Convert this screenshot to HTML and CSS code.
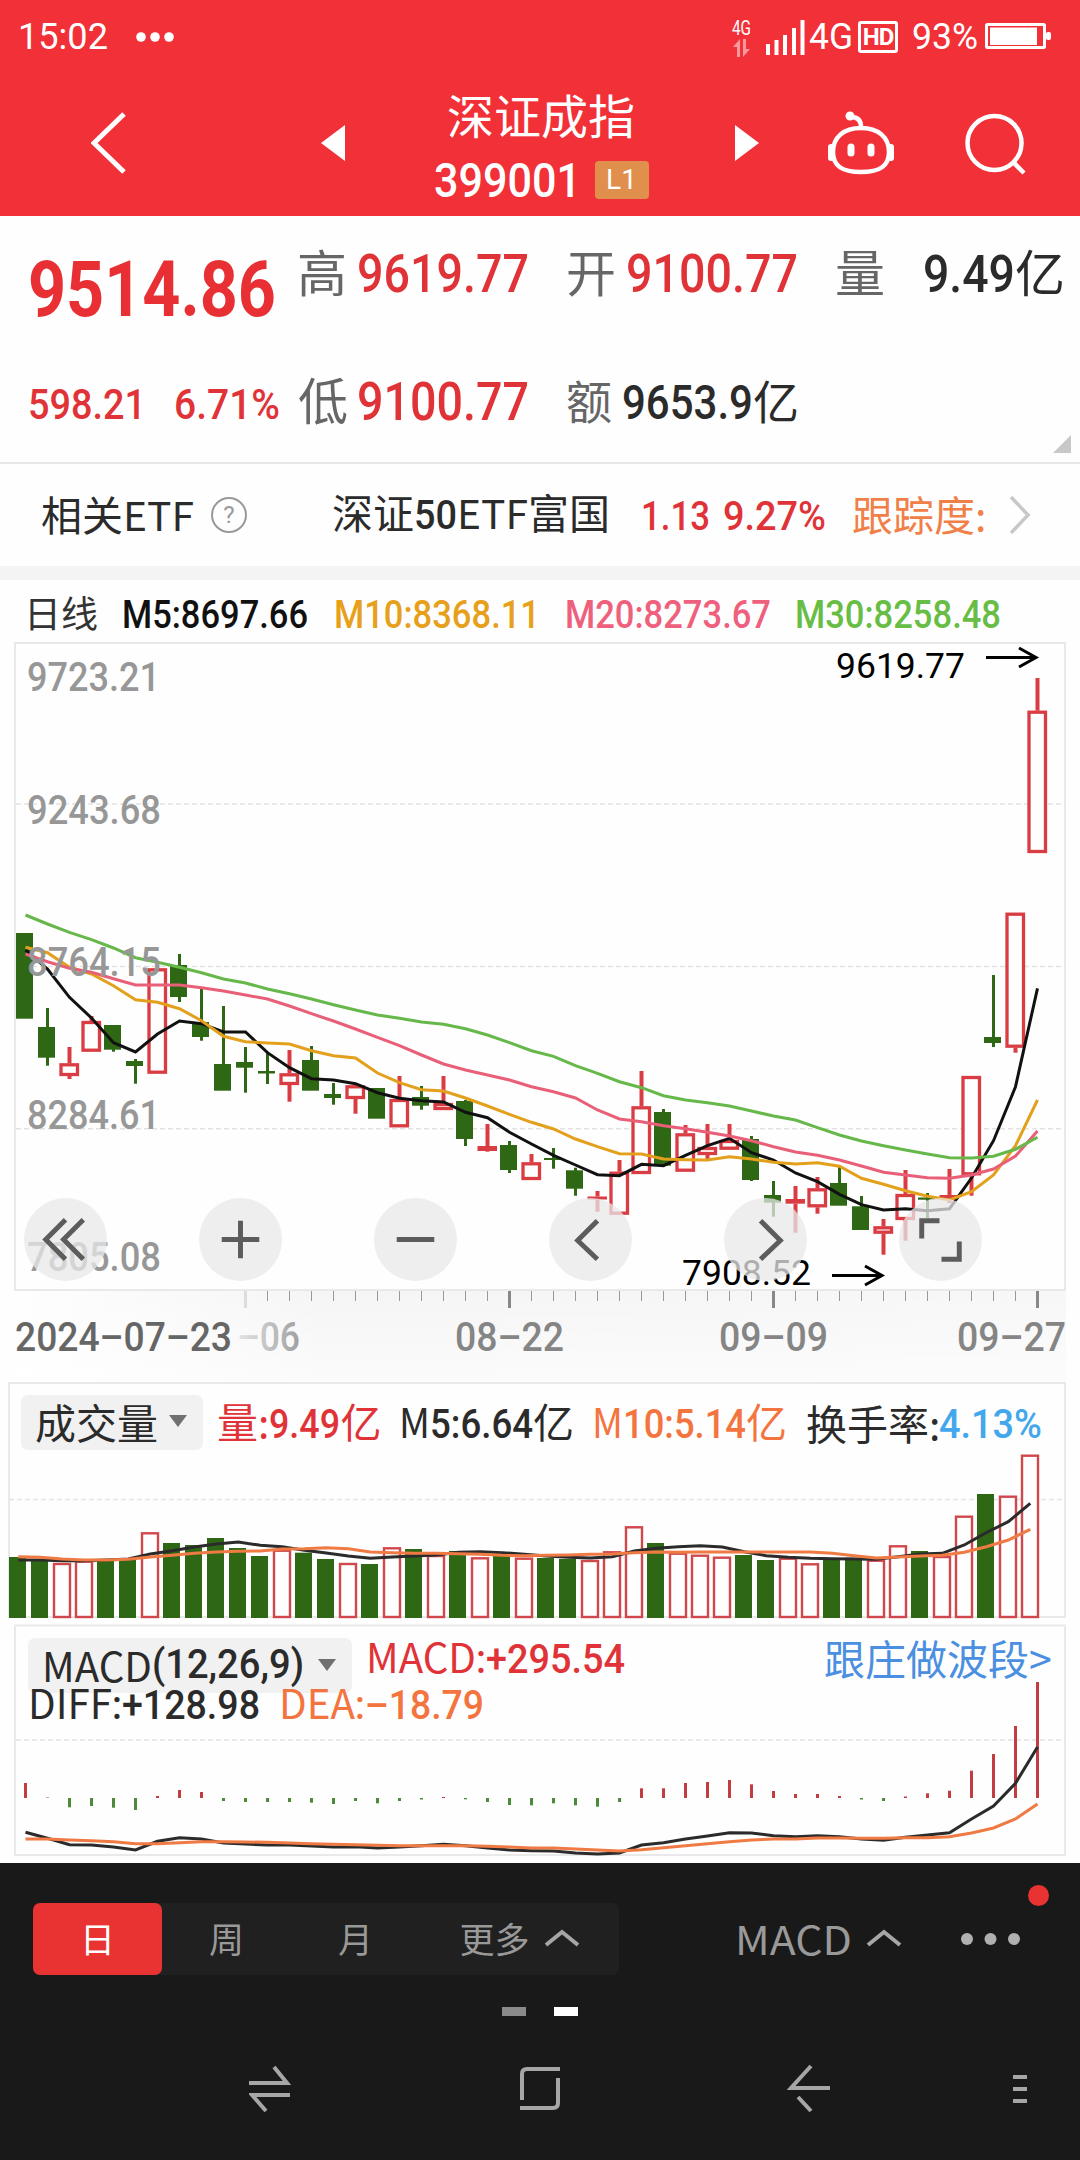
FILE: index.html
```html
<!DOCTYPE html>
<html lang="zh-CN">

<head>
    <meta charset="UTF-8">
    <meta name="viewport" content="width=device-width, initial-scale=1.0">
    <title>深证成指 399001</title>
    <link rel="stylesheet" href="styles.css">
</head>

<body>
    <header>
        <div class="status">
            <span class="fit" data-w="90">15:02</span>
            <svg width="40" height="12" viewBox="0 0 40 12" fill="#fff">
                <circle cx="6" cy="6" r="4.8" /><circle cx="20" cy="6" r="4.8" /><circle cx="34" cy="6" r="4.8" />
            </svg>
            <div class="net">
                <span class="fit" data-w="26">4G</span>
                <svg width="20" height="18" viewBox="0 0 20 18" fill="#fff" opacity=".5">
                    <path d="M5 18V8H1L8 0V18zM11 0V18L18 10H14V0z" />
                </svg>
            </div>
            <svg width="40" height="36" viewBox="0 0 40 36" fill="#fff">
                <path d="M0 25h4v11h-4zM8.5 21h4v15h-4zM17 16h4v20h-4zM26 9h4v27h-4zM34.5 1h4v35h-4z" />
            </svg>
            <span class="fit" data-w="44">4G</span>
            <span class="hd">HD</span>
            <span class="fit" data-w="66">93%</span>
            <svg width="68" height="28" viewBox="0 0 68 28">
                <rect x="1.5" y="1.5" width="58" height="23" rx="1" fill="none" stroke="#fff" stroke-width="3" />
                <rect x="5" y="4.5" width="47" height="17.5" fill="#fff" />
                <rect x="61" y="9" width="5" height="8" rx="2" fill="#fff" />
            </svg>
        </div>
        <div class="titlebar">
            <svg width="36" height="66" viewBox="0 0 36 66" fill="none" stroke="#fff" stroke-width="5">
                <path d="M33 4L3 33L33 62" />
            </svg>
            <svg width="25" height="36" viewBox="0 0 25 36" fill="#fff"><path d="M25 0V36L1 18z" /></svg>
            <div class="title">
                <h1>深证成指</h1>
                <div class="code"><b class="fit" data-w="147">399001</b><span class="level">L1</span></div>
            </div>
            <svg width="25" height="36" viewBox="0 0 25 36" fill="#fff"><path d="M0 0V36L24 18z" /></svg>
            <svg width="72" height="66" viewBox="0 0 72 66" fill="none" stroke="#fff" stroke-width="4.5">
                <path d="M37 17C37 10 33 7 27 7" />
                <circle cx="26" cy="6" r="3" fill="#fff" stroke-width="3" />
                <path d="M37 18C54 18 65 27 65 42C65 56 56 62 37 62C18 62 9 56 9 42C9 27 20 18 37 18z" />
                <path d="M7 37V48M67 37V48" stroke-width="6" stroke-linecap="round" />
                <path d="M27 37V43M47 37V43" stroke-width="7" stroke-linecap="round" />
            </svg>
            <svg width="66" height="66" viewBox="0 0 66 66" fill="none" stroke="#fff" stroke-width="4.5">
                <circle cx="31.5" cy="33" r="27" /><path d="M50 52L61 63" />
            </svg>
        </div>
    </header>

    <section class="quote">
        <div class="row row-1">
            <b class="fit price" data-w="248">9514.86</b>
            <span class="label">高</span><b class="fit up" data-w="172">9619.77</b>
            <span class="label">开</span><b class="fit up" data-w="172">9100.77</b>
            <span class="label">量</span>
            <span class="amount"><b class="fit" data-w="92">9.49</b>亿</span>
        </div>
        <div class="row row-2">
            <b class="fit change" data-w="118">598.21</b>
            <b class="fit change" data-w="106">6.71%</b>
            <span class="label">低</span><b class="fit up" data-w="172">9100.77</b>
            <span class="label small">额</span>
            <span class="amount small"><b class="fit" data-w="131">9653.9</b>亿</span>
        </div>
        <i class="corner"></i>
    </section>

    <section class="etf">
        <span class="cn">相关<span class="fit latin" data-w="71">ETF</span></span>
        <i class="help">?</i>
        <span class="cn">深证<b class="fit" data-w="43">50</b><span class="fit latin" data-w="71">ETF</span>富国</span>
        <b class="fit up" data-w="69">1.13</b>
        <b class="fit up" data-w="103">9.27%</b>
        <span class="cn track">跟踪度:</span>
        <svg width="24" height="38" viewBox="0 0 24 38" fill="none" stroke="#c8c8c8" stroke-width="3.5">
            <path d="M3 1L20 19L3 37" />
        </svg>
    </section>

    <section class="legend">
        <span class="day">日线</span>
        <b class="fit" data-w="186">M5:8697.66</b>
        <b class="fit m10" data-w="206">M10:8368.11</b>
        <b class="fit m20" data-w="206">M20:8273.67</b>
        <b class="fit m30" data-w="206">M30:8258.48</b>
    </section>

    <section class="kline">
        <svg id="kline" width="1080" height="739" viewBox="0 642 1080 739"></svg>
        <div class="tools">
            <button><svg viewBox="0 0 84 84"><path d="M42 22L22 42L42 62M60 22L40 42L60 62" /></svg></button>
            <button><svg viewBox="0 0 84 84"><path d="M23 42H61M42 23V61" /></svg></button>
            <button><svg viewBox="0 0 84 84"><path d="M23 42H61" /></svg></button>
            <button><svg viewBox="0 0 84 84"><path d="M49 23L29 43L49 62" /></svg></button>
            <button><svg viewBox="0 0 84 84"><path d="M37 23L57 43L37 62" /></svg></button>
            <button><svg viewBox="0 0 84 84"><path d="M41 23H23V41M61 44V62H43" /></svg></button>
        </div>
    </section>

    <section class="volume">
        <div class="info">
            <span class="select">成交量<i></i></span>
            <span class="red">量:<b class="fit" data-w="71">9.49</b>亿</span>
            <span><span class="fit latin" data-w="31">M</span><b class="fit" data-w="103">5:6.64</b>亿</span>
            <span class="orange"><span class="fit latin" data-w="31">M</span><b class="fit" data-w="123">10:5.14</b>亿</span>
            <span>换手率:</span>
            <b class="fit blue" data-w="103">4.13%</b>
        </div>
        <svg id="volume" width="1080" height="170" viewBox="0 1451 1080 170"></svg>
    </section>

    <section class="macd">
        <svg id="macd" width="1080" height="234" viewBox="0 1624 1080 234"></svg>
        <div class="info">
            <span class="select"><span class="fit latin" data-w="110">MACD</span><b class="fit" data-w="152">(12,26,9)</b><i></i></span>
            <span class="red"><span class="fit latin" data-w="110">MACD</span><b class="fit" data-w="149">:+295.54</b></span>
            <a class="link">跟庄做波段&gt;</a>
        </div>
        <div class="info line2">
            <span><span class="fit latin" data-w="84">DIFF</span><b class="fit" data-w="148">:+128.98</b></span>
            <span class="orange"><span class="fit latin" data-w="76">DEA</span><b class="fit" data-w="129">:–18.79</b></span>
        </div>
    </section>

    <footer>
        <i class="dot"></i>
        <div class="bar">
            <div class="periods">
                <span class="active">日</span>
                <span>周</span>
                <span>月</span>
                <span class="more">更多
                    <svg width="36" height="18" viewBox="0 0 36 18"><path d="M2 16L18 3L34 16" /></svg>
                </span>
            </div>
            <span class="indicator"><span class="fit latin" data-w="117">MACD</span>
                <svg width="36" height="18" viewBox="0 0 36 18"><path d="M2 16L18 3L34 16" /></svg>
            </span>
            <svg class="dots" width="60" height="14" viewBox="0 0 60 14">
                <circle cx="7" cy="7" r="6" /><circle cx="30.5" cy="7" r="6" /><circle cx="54" cy="7" r="6" />
            </svg>
        </div>
        <div class="pager"><i></i><i class="on"></i></div>
        <nav>
            <svg width="44" height="48" viewBox="0 0 44 48"><path d="M0 18H38L25 2M41 30H3L17 46" /></svg>
            <svg width="44" height="48" viewBox="0 0 44 48"><path d="M3 35V9Q3 4 8 4H41M39 13V38Q39 43 34 43H1" /></svg>
            <svg width="44" height="50" viewBox="0 0 44 50"><path d="M24 2L4 24H43M11 33L24 47" /></svg>
            <svg width="16" height="30" viewBox="0 0 16 30"><path d="M1 3H15M1 15H15M1 27H15" /></svg>
        </nav>
    </footer>

    <script src="chart.js"></script>
</body>

</html>
```
FILE: styles.css
```css
* {
    box-sizing: border-box;
}

body {
    margin: 0;
    width: 1080px;
    height: 2160px;
    overflow: hidden;
    display: flex;
    flex-direction: column;
    background-color: #fefefe;
    color: #2b2b2b;
    font-family: "Noto Sans CJK SC", sans-serif;
    line-height: 1;
}

svg {
    display: block;
    flex: none;
}

i {
    font-style: normal;
}

/* condensed figures, width comes from data-w */
.fit {
    display: inline-block;
    justify-self: start;
    font-family: Roboto, "Noto Sans CJK SC", sans-serif;
    white-space: nowrap;
    transform-origin: 0 50%;
}

.latin {
    font-family: "Noto Sans CJK SC", sans-serif;
}

b {
    font-weight: 500;
}

.up,
.red {
    color: #e03338;
}

.orange {
    color: #f4743f;
}

.blue {
    color: #42a7ec;
}

/* ---- header ---- */
header {
    height: 216px;
    background-color: #f13038;
    color: #fff;
}

.status {
    height: 74px;
    display: grid;
    grid-template-columns: 117px 597px 34px 43px 49px 54px 73px 68px;
    padding-left: 18px;
    align-items: center;
    font-size: 36px;
}

.net {
    font-size: 20px;
    height: 39px;
    display: flex;
    flex-direction: column;
    justify-content: space-between;
}

.hd {
    width: 40px;
    height: 32px;
    border: 3px solid #fff;
    border-radius: 3px;
    font: 700 24px/27px Roboto, sans-serif;
    text-align: center;
    letter-spacing: -1px;
}

.titlebar {
    height: 142px;
    padding-left: 91px;
    padding-bottom: 4px;
    display: grid;
    grid-template-columns: 229px 101px 314px 89px 139px 80px;
    align-items: center;
}

.title {
    width: 240px;
    display: flex;
    flex-direction: column;
    align-items: center;
    padding-top: 4px;
}

h1 {
    margin: 0 0 14px;
    font-size: 47px;
    line-height: 56px;
    font-weight: 400;
}

.code {
    display: flex;
    align-items: center;
    gap: 14px;
    font-size: 49px;
}

.level {
    width: 54px;
    height: 38px;
    border-radius: 4px;
    background-color: #e0904c;
    font: 400 28px/38px Roboto, sans-serif;
    text-align: center;
}

/* ---- quote ---- */
.quote {
    position: relative;
    height: 248px;
    border-bottom: 2px solid #e6e6e6;
}

.row {
    display: grid;
    grid-template-rows: 56px;
    align-items: center;
    font-size: 53px;
}

.row .up {
    padding-top: 5px;
}

.row-1 {
    margin-top: 28px;
    grid-template-columns: 269px 60px 209px 60px 209px 88px 160px;
    padding-left: 28px;
}

.row-2 {
    margin-top: 72px;
    grid-template-columns: 146px 124px 59px 209px 56px 180px;
    padding-left: 28px;
}

.price {
    font-size: 77px;
    font-weight: 700;
    color: #e83034;
    padding-top: 36px;
}

.change {
    font-size: 43px;
    color: #e03338;
    padding-top: 9px;
}

.label {
    font-size: 50px;
    color: #666;
    padding-bottom: 4px;
}

.label.small {
    font-size: 46px;
    padding-bottom: 2px;
}

.amount {
    white-space: nowrap;
    font-size: 50px;
    padding-top: 2px;
}

.amount.small {
    font-size: 46px;
}

.amount .fit {
    font-size: 52px;
}

.amount.small .fit {
    font-size: 49px;
}

.corner {
    position: absolute;
    right: 9px;
    bottom: 9px;
    border-left: 18px solid transparent;
    border-bottom: 18px solid #c8c8c8;
}

.etf {
    height: 116px;
    border-bottom: 14px solid #f4f4f4;
    padding-left: 41px;
    display: grid;
    grid-template-columns: 170px 121px 309px 82px 129px 156px 30px;
    align-items: center;
    font-size: 41px;
}

.cn {
    font-size: 41px;
    white-space: nowrap;
    padding-bottom: 4px;
}

.etf .fit {
    font-size: 40px;
}

.etf .up {
    padding-top: 3px;
}

.help {
    width: 36px;
    height: 36px;
    border: 2px solid #999;
    border-radius: 50%;
    color: #999;
    font: 24px/32px Roboto, sans-serif;
    text-align: center;
}

.track {
    color: #f08048;
}

.legend {
    height: 62px;
    padding: 7px 0 0 24px;
    display: grid;
    grid-template-columns: 98px 212px 231px 230px 220px;
    align-items: center;
    font-size: 38px;
    color: #111;
}

.day {
    font-size: 37px;
    color: #333;
    padding-bottom: 4px;
}

.m10 {
    color: #e6a01a;
}

.m20 {
    color: #ee607c;
}

.m30 {
    color: #68bd45;
}

/* ---- charts ---- */
.kline {
    position: relative;
    height: 739px;
}

.tools {
    position: absolute;
    top: 556px;
    left: 24px;
    display: flex;
    gap: 92px;
}

.tools button {
    width: 83px;
    height: 83px;
    padding: 0;
    border: none;
    border-radius: 50%;
    background-color: rgba(232, 232, 232, 0.75);
}

.tools path {
    fill: none;
    stroke: #5c5c5c;
    stroke-width: 5;
}

.info {
    display: grid;
    align-items: center;
    font-size: 41px;
    white-space: nowrap;
}

.volume .info {
    height: 70px;
    padding: 12px 0 0 21px;
    grid-template-columns: 196px 182px 193px 214px 133px 110px;
}

.volume .blue {
    padding-top: 4px;
}

.volume {
    height: 243px;
    position: relative;
    background: linear-gradient(#e9e9e9, #e9e9e9) 8px 1px / 1057px 2px no-repeat, linear-gradient(#e9e9e9, #e9e9e9) 8px 1px / 2px 80px no-repeat, linear-gradient(#e9e9e9, #e9e9e9) 1064px 1px / 2px 80px no-repeat;
}

.select {
    display: flex;
    align-items: center;
    width: 182px;
    height: 55px;
    padding-left: 14px;
    padding-bottom: 2px;
    border-radius: 7px;
    background-color: #f1f1f1;
}

.select i {
    margin-left: 11px;
    border: 9px solid transparent;
    border-top: 12px solid #707070;
    border-bottom: 0;
}

.macd {
    position: relative;
    height: 239px;
}

.macd svg {
    position: absolute;
    left: 0;
    top: 0;
}

.macd .info {
    position: relative;
    height: 69px;
    padding: 14px 0 0 28px;
    grid-template-columns: 338px 458px 240px;
    grid-template-rows: 55px;
}

.macd .select {
    width: 324px;
    padding: 0 0 2px 14px;
}

.macd .select i {
    margin-left: 14px;
}

.macd .info .red,
.macd .link {
    padding-bottom: 17px;
}

.macd .link {
    color: #4a8fe0;
    font-size: 41px;
}

.macd .line2 {
    height: 48px;
    padding: 0 0 0 28px;
    margin-top: -14px;
    grid-template-columns: 251px 300px;
    grid-template-rows: 48px;
}

.frame {
    fill: none;
    stroke: #e9e9e9;
    stroke-width: 2;
}

.grid {
    stroke: #e2e2e2;
    stroke-width: 1.5;
    stroke-dasharray: 5 3;
}

.line {
    fill: none;
    stroke-width: 3;
}

.scale {
    font: 500 40px Roboto, sans-serif;
    fill: #979797;
}

.date {
    font: 500 40px Roboto, sans-serif;
    fill: #858585;
}

.date.first {
    fill: #666;
}

.date.faded {
    fill: url(#fade);
}

.peak {
    font: 400 35.5px Roboto, sans-serif;
    fill: #000;
}

.arrow {
    fill: none;
    stroke: #000;
    stroke-width: 3;
}

/* ---- bottom ---- */
footer {
    position: relative;
    height: 297px;
    background-color: #191919;
    color: #999;
    font-size: 35px;
}

.dot {
    position: absolute;
    left: 1028px;
    top: 22px;
    width: 21px;
    height: 21px;
    border-radius: 50%;
    background-color: #e93232;
}

.bar {
    padding: 40px 0 0 33px;
    display: grid;
    grid-template-columns: 702px 225px 60px;
    align-items: center;
}

.periods {
    display: flex;
    width: 586px;
    height: 72px;
    border-radius: 7px;
    background-color: #202020;
}

.periods span {
    width: 129px;
    display: flex;
    align-items: center;
    justify-content: center;
    padding-bottom: 3px;
}

.periods .active {
    border-radius: 7px;
    background-color: #e93232;
    color: #fff;
}

.periods .more {
    width: 199px;
    gap: 14px;
}

.indicator {
    display: flex;
    align-items: center;
    gap: 14px;
    font-size: 40px;
    padding-bottom: 2px;
}

footer path {
    fill: none;
    stroke: #a6a6a6;
    stroke-width: 4;
}

.dots {
    fill: #b0b0b0;
}

.pager {
    display: flex;
    gap: 28px;
    padding: 32px 0 0 502px;
}

.pager i {
    width: 24px;
    height: 9px;
    background-color: #8a8a8a;
}

.pager .on {
    background-color: #fff;
}

nav {
    display: grid;
    grid-template-columns: 270px 268px 225px 16px;
    align-items: center;
    padding: 48px 0 0 249px;
}
```
FILE: chart.js
```js
// squeeze every .fit text to its own width
document.querySelectorAll(".fit").forEach(el => {
    const natural = el.getBoundingClientRect().width;
    el.style.width = el.dataset.w + "px";
    el.style.transform = `scaleX(${el.dataset.w / natural})`;
});

const UP = "#d93c42";
const DOWN = "#2f6815";
const STEP = 22;

// direction, high, body top, body bottom, low
const candles = [
    ["d", 933, 933, 1018.7, 1018], ["d", 1008, 1027, 1057.7, 1065.7], ["u", 1047, 1063.3, 1076, 1079],
    ["u", 1016, 1021, 1051.7, 1051], ["d", 1025, 1025, 1049.7, 1051.7], ["d", 1059, 1061, 1066, 1083.7],
    ["u", 969, 968.3, 1073.7, 1073], ["d", 954, 965, 997, 1002], ["d", 989, 1022, 1037, 1040.7],
    ["d", 1006, 1064, 1090.7, 1090], ["d", 1047, 1062, 1067.7, 1092.7], ["d", 1053, 1071, 1073.5, 1084],
    ["u", 1050, 1073.3, 1085, 1101.7], ["d", 1046, 1060, 1090.7, 1090], ["d", 1083, 1094, 1098, 1104.7],
    ["u", 1084, 1085.3, 1099, 1113.7], ["d", 1088, 1088, 1118.7, 1118], ["u", 1076, 1099, 1127.3, 1127],
    ["d", 1086, 1097, 1105.7, 1109.7], ["u", 1076, 1103, 1110, 1110], ["d", 1100, 1101, 1139, 1146],
    ["u", 1124, 1146, 1151, 1151.7], ["d", 1141, 1145, 1170, 1173], ["u", 1154, 1162.3, 1180, 1180],
    ["d", 1148, 1158, 1160, 1168.7], ["d", 1167.7, 1170.3, 1188.7, 1195.7], ["u", 1191, 1196.5, 1199.5, 1211.7],
    ["u", 1160, 1171.7, 1214.7, 1214], ["u", 1071, 1106.3, 1174, 1174], ["d", 1109, 1112, 1165.7, 1165],
    ["u", 1125, 1133.3, 1171.7, 1171], ["u", 1124, 1147, 1155, 1159], ["u", 1124, 1140, 1149.7, 1149],
    ["d", 1136, 1139, 1180, 1181], ["d", 1181, 1195, 1202.7, 1216.7], ["u", 1186, 1199, 1203.7, 1232.7],
    ["u", 1177, 1188.3, 1207.3, 1213.7], ["d", 1166, 1183, 1205.7, 1205], ["d", 1196, 1206.3, 1230, 1230],
    ["u", 1219, 1226.3, 1233.7, 1254.7], ["u", 1170, 1194, 1220, 1240.7], ["d", 1193, 1197.5, 1199.7, 1218],
    ["u", 1169, 1195, 1199, 1203], ["u", 1076, 1076, 1175.3, 1195.7], ["d", 975, 1037, 1043, 1047],
    ["u", 913, 912.7, 1047.7, 1052.7], ["u", 678, 710.7, 853, 853]
];

const ma5 = [950, 969, 997.3, 1018, 1042.7, 1052, 1034, 1021, 1023.7, 1032, 1032, 1052.7, 1067.7, 1078.7, 1080, 1083.7, 1092.7, 1098.3, 1100.7, 1102, 1112.3, 1117.7, 1132.3, 1144, 1155.3, 1165, 1174.7, 1175.7, 1164.3, 1165.7, 1155.3, 1145.7, 1138.3, 1152.7, 1160, 1173, 1181.7, 1194.3, 1204.7, 1210, 1208.7, 1210.7, 1208.7, 1178, 1140.7, 1086.7, 988.3];
const ma10 = [947.3, 952.7, 967.3, 974, 985.7, 999.7, 1002.3, 1008.7, 1020.7, 1036.3, 1041.7, 1043, 1044, 1050.7, 1055.7, 1058, 1073, 1082.7, 1089.7, 1091, 1098, 1106, 1114.3, 1122.3, 1129, 1139, 1146.7, 1153.7, 1154, 1159, 1159.7, 1160, 1156.7, 1159, 1162.3, 1164, 1162.7, 1166.3, 1178.3, 1184.3, 1190.7, 1196.3, 1200, 1191.7, 1175, 1145.7, 1100];
const ma20 = [954, 961.7, 968.3, 972.3, 978.7, 985, 985, 985, 987.7, 991, 995, 999, 1006, 1013.7, 1021, 1029, 1037.3, 1045.7, 1055, 1064, 1070, 1075, 1080, 1086.7, 1091.7, 1098, 1110, 1119, 1121.7, 1125.7, 1128.7, 1132.3, 1136, 1140.7, 1146.7, 1152, 1155.3, 1160, 1166, 1172.3, 1175, 1177.7, 1178.3, 1175, 1169, 1156, 1131];
const ma30 = [915, 924, 932.3, 939.7, 948, 957.7, 962.3, 967.3, 972.7, 979, 983, 989, 993.7, 999, 1004.7, 1010, 1015, 1018.3, 1022, 1024.3, 1028.7, 1035, 1042.7, 1050.7, 1056.3, 1065.7, 1073.3, 1081.7, 1087.7, 1095.7, 1100, 1102.7, 1106, 1111, 1116, 1120, 1127.7, 1135, 1141, 1145.7, 1150, 1154, 1157.7, 1158, 1156.3, 1149.3, 1137.3];

const volumes = [1557, 1560, 1563, 1560.7, 1560.7, 1560, 1532.3, 1543, 1545, 1538, 1548, 1556, 1549.7, 1552.7, 1559, 1563, 1564, 1547.3, 1549, 1555, 1551, 1557.3, 1555, 1557.7, 1558, 1559, 1560, 1551.3, 1526.3, 1543, 1552.7, 1554.7, 1556.7, 1555, 1560, 1557.7, 1563.3, 1559.7, 1557.7, 1559.7, 1545.3, 1551, 1556, 1515.7, 1494, 1495.7, 1454.7];
const vol5 = [1560, 1560, 1560.7, 1560.7, 1560, 1559, 1554, 1550.7, 1547, 1544, 1542, 1545.3, 1546.7, 1550.3, 1553, 1556, 1558.3, 1557, 1556, 1555, 1552.3, 1551.7, 1552.7, 1554.3, 1556, 1557.3, 1558, 1556.7, 1551, 1548.3, 1546.7, 1545.7, 1547, 1551.7, 1555.7, 1557.3, 1558.3, 1558.7, 1559, 1559.3, 1556.7, 1554, 1553.3, 1545, 1532.7, 1521.7, 1503.3];
const vol10 = [1556.7, 1557.3, 1559, 1560, 1560, 1559.3, 1557, 1555.3, 1553.3, 1552, 1551.3, 1551, 1549, 1548.7, 1547.7, 1548.7, 1552, 1552.7, 1553.3, 1553.3, 1553.7, 1554.3, 1555.3, 1555.7, 1555.3, 1555, 1554.3, 1554, 1552.7, 1552, 1552.3, 1552, 1552, 1552, 1552, 1552, 1552, 1553.3, 1555.7, 1558, 1557, 1556, 1555.3, 1552.3, 1546.7, 1540, 1529.3];

const macd = [1783, 1797.5, 1807.3, 1806, 1807.7, 1810, 1796, 1790, 1792, 1801, 1802, 1802, 1802, 1802.7, 1804, 1801, 1803.3, 1801, 1799.5, 1797, 1799.3, 1802, 1805, 1805.3, 1803.3, 1805.3, 1806.7, 1802, 1788.3, 1788.3, 1783, 1782, 1780, 1784.3, 1791, 1794, 1794, 1796, 1799.5, 1801, 1796.5, 1793.3, 1790.7, 1770.7, 1754, 1726, 1682];
const diff = [1832.3, 1838.3, 1844.7, 1845, 1847, 1850, 1841.3, 1837.7, 1839, 1843, 1844, 1845, 1845, 1846, 1847, 1846.7, 1848, 1847, 1845.7, 1844.3, 1845.7, 1848, 1850, 1850.7, 1851, 1853, 1854, 1853, 1845, 1842.7, 1839, 1836, 1832.7, 1833, 1835.7, 1836.7, 1835.7, 1836.7, 1839, 1840.3, 1837.3, 1835, 1832.7, 1819, 1806, 1783.3, 1747];
const dea = [1839, 1839, 1840, 1840.7, 1841.7, 1843.7, 1843.7, 1842.7, 1841.7, 1841.7, 1842, 1842.3, 1843, 1843.7, 1844.3, 1844.7, 1845.3, 1845.7, 1845.7, 1845.7, 1845.7, 1846.3, 1847, 1848, 1848, 1849, 1850, 1851, 1849.7, 1847.7, 1845.7, 1843.7, 1841.7, 1840, 1839, 1839, 1838, 1838, 1838.3, 1838.3, 1837.7, 1837.7, 1836.7, 1833, 1828, 1819, 1804];

const px = i => 25.5 + STEP * i;

function rect(x, y, w, h, attrs) {
    return `<rect x="${x}" y="${y}" width="${w}" height="${h}" ${attrs}/>`;
}

function line(data, color, x0) {
    const points = data.map((y, i) => `${x0 + STEP * i},${y}`).join(" ");
    return `<polyline class="line" points="${points}" stroke="${color}"/>`;
}

function grid(x, y) {
    return `<path class="grid" d="M${x} ${y}H1065"/>`;
}

function text(cls, x, y, w, str) {
    return `<text class="${cls}" x="${x}" y="${y}" textLength="${w}" lengthAdjust="spacingAndGlyphs">${str}</text>`;
}

function drawKline() {
    let s = `<defs>
        <linearGradient id="shade" x1="0" x2="1" y1="0" y2="0"><stop offset="0" stop-color="#fefefe"/><stop offset=".3" stop-color="#f5f5f5"/><stop offset="1" stop-color="#f7f7f7"/></linearGradient>
        <linearGradient id="fade" x1="0" x2="1" y1="0" y2="0"><stop offset="0" stop-color="#e4e4e4"/><stop offset="1" stop-color="#a0a0a0"/></linearGradient>
        <linearGradient id="down" x1="0" x2="0" y1="0" y2="1"><stop offset="0" stop-color="#fff" stop-opacity="0"/><stop offset="1" stop-color="#fff" stop-opacity=".6"/></linearGradient>
    </defs>`;
    s += rect(16, 1290, 1050, 91, 'fill="url(#shade)"') + rect(16, 1290, 1050, 91, 'fill="url(#down)"');
    s += rect(15, 643, 1050, 647, 'class="frame"');
    s += grid(16, 804) + grid(16, 966.5) + grid(16, 1128.7);

    candles.forEach(([dir, high, top, bottom, low], i) => {
        const x = px(i);
        if (dir === "d") {
            s += rect(x - 1.5, high, 3, low - high, `fill="${DOWN}"`);
            s += rect(i ? x - 9.5 : 16, top, 17, bottom - top, `fill="${DOWN}"`);
        } else {
            s += rect(x - 2, high, 4, Math.max(top - high, 0), `fill="${UP}"`);
            s += rect(x - 2, bottom, 4, Math.max(low - bottom, 0), `fill="${UP}"`);
            if (bottom - top < 6) {
                s += rect(x - 10, top, 19.5, bottom - top, `fill="${UP}"`);
            } else {
                s += rect(x - 8.5, top + 1.5, 16.5, bottom - top - 3, `fill="#fefefe" stroke="${UP}" stroke-width="3.3"`);
            }
        }
    });

    s += line(ma5, "#111", 25.5) + line(ma10, "#e3a01c", 25.5) + line(ma20, "#e95f78", 25.5) + line(ma30, "#66b84a", 25.5);

    s += text("scale", 27, 691, 133, "9723.21") + text("scale", 27, 823.5, 134, "9243.68");
    s += text("scale", 27, 975.5, 134, "8764.15") + text("scale", 27, 1129, 133, "8284.61");
    s += text("scale", 27, 1270.5, 134, "7805.08");

    s += text("peak", 836, 678, 129, "9619.77") + '<path class="arrow" d="M986 657.5H1036M1019 648L1036 657.5L1019 667"/>';
    s += text("peak", 682, 1284.5, 129, "7908.52") + '<path class="arrow" d="M832 1275.5H882M865 1266L882 1275.5L865 1285"/>';

    // time axis
    for (let i = 10; i < 47; i++) {
        const major = (i - 10) % 12 === 0;
        const color = i === 10 ? "#dcdcdc" : major ? "#888" : "#999";
        s += rect(px(i) - (major ? 1.5 : 0.5), 1291, major ? 3 : 1, major ? 17 : 10, `fill="${color}"`);
    }
    s += text("date first", 15, 1351, 217, "2024–07–23") + text("date faded", 237, 1351, 63, "–06");
    s += text("date", 455, 1351, 109, "08–22") + text("date", 719, 1351, 109, "09–09") + text("date", 957, 1351, 109, "09–27");
    document.getElementById("kline").innerHTML = s;
}

function drawVolume() {
    let s = '<path class="frame" d="M9 1451V1617H1065V1451"/>' + grid(9, 1499.5);
    volumes.forEach((top, i) => {
        const x = 17.5 + STEP * i;
        if (candles[i][0] === "d") {
            s += rect(x - 8.5, top, 17, 1618 - top, `fill="${DOWN}"`);
        } else {
            s += rect(x - 7.5, top + 1, 16, 1616 - top, 'fill="#fefefe" stroke="#d0484c" stroke-width="2.4"');
        }
    });
    s += line(vol5, "#2b2b2b", 18.3) + line(vol10, "#f07a43", 18.3);
    document.getElementById("volume").innerHTML = s;
}

function drawMacd() {
    let s = rect(15, 1625.5, 1050, 229.5, 'class="frame"') + grid(16, 1740);
    macd.forEach((y, i) => {
        const zero = 1798;
        const color = y < zero ? "#c23c42" : "#4a8c3a";
        s += rect(px(i) - 1.5, Math.min(y, zero), 3, Math.abs(y - zero), `fill="${color}"`);
    });
    s += line(diff, "#2b2b2b", 25.5) + line(dea, "#f07a43", 25.5);
    document.getElementById("macd").innerHTML = s;
}

drawKline();
drawVolume();
drawMacd();
```
